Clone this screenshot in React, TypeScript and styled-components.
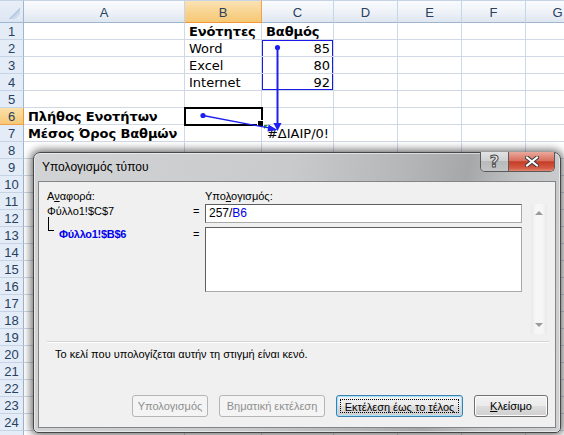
import React from "react";
import styled, { createGlobalStyle } from "styled-components";

type Align = "left" | "right" | "center";
type RangeEdge = "top" | "mid" | "bottom";

interface CellData {
  text?: string;
  bold?: boolean;
  align?: Align;
  range?: RangeEdge;
  active?: boolean;
  error?: boolean;
}

const COLUMNS = ["A", "B", "C", "D", "E", "F", "G"];
const ROW_COUNT = 25;
const SELECTED_COL = "B";
const SELECTED_ROW = 6;

const cells: Record<string, CellData> = {
  B1: { text: "Ενότητες", bold: true },
  C1: { text: "Βαθμός", bold: true },
  B2: { text: "Word" },
  C2: { text: "85", align: "right", range: "top" },
  B3: { text: "Excel" },
  C3: { text: "80", align: "right", range: "mid" },
  B4: { text: "Internet" },
  C4: { text: "92", align: "right", range: "bottom" },
  A6: { text: "Πλήθος Ενοτήτων", bold: true },
  B6: { active: true },
  A7: { text: "Μέσος Όρος Βαθμών", bold: true },
  C7: { text: "#ΔΙΑΙΡ/0!", align: "center", error: true },
};

export default function App() {
  const rows = Array.from({ length: ROW_COUNT }, (_, i) => i + 1);

  return (
    <>
      <GlobalStyle />
      <Sheet>
        <Grid>
          <Corner />
          {COLUMNS.map((col) => (
            <ColHead key={col} $selected={col === SELECTED_COL}>
              {col}
            </ColHead>
          ))}
          {rows.map((row) => (
            <React.Fragment key={row}>
              <RowHead $selected={row === SELECTED_ROW}>{row < ROW_COUNT ? row : ""}</RowHead>
              {COLUMNS.map((col) => {
                const c = cells[col + row] || {};
                return (
                  <Cell
                    key={col}
                    $bold={c.bold}
                    $align={c.align || "left"}
                    $range={c.range}
                    $active={c.active}
                    $error={c.error}
                  >
                    {c.text}
                  </Cell>
                );
              })}
            </React.Fragment>
          ))}
        </Grid>

        <Tracers width="564" height="435" viewBox="0 0 564 435">
          <circle cx="277.5" cy="47.5" r="2.6" />
          <line x1="277.5" y1="47.5" x2="277.5" y2="124" strokeWidth="2" />
          <polygon points="273.5,123 281.5,123 277.5,131" />
          <circle cx="203" cy="115.5" r="2.6" />
          <line x1="203" y1="115.5" x2="270" y2="128.2" strokeWidth="1.3" />
          <polygon points="268.5,124.5 267.5,131.5 277.5,130" />
        </Tracers>

        <Window>
          <TitleBar>
            <Caption>Υπολογισμός τύπου</Caption>
            <CaptionButtons>
              <HelpButton>?</HelpButton>
              <CloseButton>
                <svg width="14" height="11" viewBox="0 0 14 11">
                  <path d="M2 1.5 L12 9.5 M12 1.5 L2 9.5" stroke="#3b3b3b" strokeWidth="4" strokeLinecap="square" />
                  <path d="M2 1.5 L12 9.5 M12 1.5 L2 9.5" stroke="#fff" strokeWidth="2" strokeLinecap="square" />
                </svg>
              </CloseButton>
            </CaptionButtons>
          </TitleBar>

          <Client>
            <EvalGrid>
              <FieldLabel $area="rl">
                Α<u>ν</u>αφορά:
              </FieldLabel>
              <FieldLabel $area="el">
                Υπο<u>λ</u>ογισμός:
              </FieldLabel>
              <RefText>Φύλλο1!$C$7</RefText>
              <Equals $area="e1">=</Equals>
              <EvalInput>
                257/<RefPart>B6</RefPart>
              </EvalInput>
              <RefChild>Φύλλο1!$B$6</RefChild>
              <Equals $area="e2">=</Equals>
              <EvalBox />
              <ScrollBar>
                <ScrollArrow $dir="up" />
                <ScrollArrow $dir="down" />
              </ScrollBar>
            </EvalGrid>

            <Separator />
            <Message>Το κελί που υπολογίζεται αυτήν τη στιγμή είναι κενό.</Message>

            <ButtonRow>
              <DlgButton $w={76} $variant="disabled">
                Υπολογισμός
              </DlgButton>
              <DlgButton $w={106} $variant="disabled">
                Βηματική εκτέλεση
              </DlgButton>
              <DlgButton $w={127} $variant="default">
                <FocusRect>
                  Εκτέλεση έως το <u>τ</u>έλος
                </FocusRect>
              </DlgButton>
              <DlgButton $w={74}>
                <span>
                  <u>Κ</u>λείσιμο
                </span>
              </DlgButton>
            </ButtonRow>
          </Client>
        </Window>
      </Sheet>
    </>
  );
}

const GlobalStyle = createGlobalStyle`
  html, body {
    margin: 0;
    padding: 0;
    background: #fff;
    overflow: hidden;
  }
`;

const Sheet = styled.div`
  position: relative;
  width: 564px;
  height: 435px;
  overflow: hidden;
  background: #fff;
`;

const Grid = styled.div`
  display: grid;
  grid-template-columns: 24px 161px 77px 72px 64px 64px 64px 64px;
  grid-template-rows: 23px repeat(${ROW_COUNT}, 17px);
`;

const Corner = styled.div`
  position: relative;
  box-sizing: border-box;
  background: linear-gradient(#e9eff8, #dce6f2);
  border-right: 1px solid #9eb6ce;
  border-bottom: 1px solid #9eb6ce;
  border-top: 1px solid #c5d3e4;

  &::after {
    content: "";
    position: absolute;
    right: 3px;
    bottom: 3px;
    width: 11px;
    height: 11px;
    background: linear-gradient(135deg, transparent 50%, #b4c9e2 50%, #f3f7fc 100%);
  }
`;

const ColHead = styled.div<{ $selected?: boolean }>`
  box-sizing: border-box;
  display: flex;
  align-items: center;
  justify-content: center;
  border-top: 1px solid #c5d3e4;
  border-right: 1px solid ${(p) => (p.$selected ? "#f2a24a" : "#c8d5e5")};
  border-bottom: 1px solid ${(p) => (p.$selected ? "#f29536" : "#9eb6ce")};
  background: ${(p) =>
    p.$selected
      ? "linear-gradient(#fbe3b4, #f8d38f 55%, #f6c875)"
      : "linear-gradient(#f9fbfd, #eef2f8 55%, #dfe6f0)"};
  font: 13px "Liberation Sans", Arial, sans-serif;
  color: #27415f;
  padding-top: 1px;
`;

const RowHead = styled.div<{ $selected?: boolean }>`
  box-sizing: border-box;
  display: flex;
  align-items: center;
  justify-content: center;
  border-right: 1px solid ${(p) => (p.$selected ? "#f29536" : "#9eb6ce")};
  border-bottom: 1px solid ${(p) => (p.$selected ? "#f2a24a" : "#c5d3e4")};
  background: ${(p) => (p.$selected ? "linear-gradient(#fbe0aa, #f6c875)" : "#e4ecf7")};
  font: 13px "Liberation Sans", Arial, sans-serif;
  color: #27415f;
`;

const rangeShadow = (edge?: RangeEdge) => {
  if (!edge) return "none";
  const parts = ["inset 1px 0 0 #1a1ae6", "inset -1px 0 0 #1a1ae6"];
  if (edge === "top") parts.push("inset 0 1px 0 #1a1ae6");
  if (edge === "bottom") parts.push("inset 0 -1px 0 #1a1ae6");
  return parts.join(", ");
};

const Cell = styled.div<{
  $bold?: boolean;
  $align: Align;
  $range?: RangeEdge;
  $active?: boolean;
  $error?: boolean;
}>`
  position: relative;
  box-sizing: border-box;
  display: flex;
  align-items: center;
  justify-content: ${(p) =>
    p.$align === "right" ? "flex-end" : p.$align === "center" ? "center" : "flex-start"};
  padding: 1px 3px 0 4px;
  border-right: 1px solid #d0d7e5;
  border-bottom: 1px solid #d0d7e5;
  font: ${(p) => (p.$bold ? "bold" : "normal")} 13px "DejaVu Sans", Verdana, sans-serif;
  letter-spacing: ${(p) => (p.$bold ? "-0.1px" : "0")};
  color: #000;
  white-space: nowrap;
  box-shadow: ${(p) => rangeShadow(p.$range)};
  z-index: ${(p) => (p.$active ? 2 : 1)};
  outline: ${(p) => (p.$active ? "2px solid #000" : "none")};
  outline-offset: -1px;

  &::after {
    content: "";
    display: ${(p) => (p.$active ? "block" : "none")};
    position: absolute;
    right: -3px;
    bottom: -3px;
    width: 5px;
    height: 5px;
    background: #000;
    border: 1px solid #fff;
  }

  &::before {
    content: "";
    display: ${(p) => (p.$error ? "block" : "none")};
    position: absolute;
    left: 2px;
    top: 0;
    border-top: 4px solid #1e9a3a;
    border-right: 4px solid transparent;
  }
`;

const Tracers = styled.svg`
  position: absolute;
  left: 0;
  top: 0;
  z-index: 3;
  pointer-events: none;
  fill: #1f1ff0;
  stroke: #1f1ff0;

  circle,
  polygon {
    stroke: none;
  }
`;

const Window = styled.div`
  position: absolute;
  left: 33px;
  top: 152px;
  z-index: 5;
  width: 528px;
  height: 281px;
  box-sizing: border-box;
  display: flex;
  flex-direction: column;
  border: 1px solid #474747;
  border-radius: 7px 7px 5px 5px;
  background: linear-gradient(100deg, #d2d3d4 0%, #c9cacb 45%, #b5b6b7 65%, #a6a7a8 76%, #c4c5c6 86%, #d0d1d2 100%);
  box-shadow: 0 0 8px 2px rgba(0, 0, 0, 0.6), inset 0 0 0 1px rgba(255, 255, 255, 0.55);
  font-family: "Liberation Sans", Tahoma, Arial, sans-serif;
  font-size: 11px;
  color: #000;
`;

const TitleBar = styled.div`
  height: 28px;
  flex: none;
  display: flex;
  align-items: flex-start;
  justify-content: space-between;
  padding: 0 5px 0 8px;
`;

const Caption = styled.div`
  align-self: center;
  font-size: 12px;
  color: #000;
  padding-bottom: 1px;
`;

const CaptionButtons = styled.div`
  display: flex;
  height: 19px;
  margin-top: -1px;
  border: 1px solid #5a5a5a;
  border-top: none;
  border-radius: 0 0 5px 5px;
  overflow: hidden;
`;

const HelpButton = styled.div`
  width: 27px;
  display: flex;
  align-items: center;
  justify-content: center;
  background: linear-gradient(#e2e3e4, #cfd0d1 45%, #b9babb 50%, #c3c4c5);
  border-right: 1px solid #5a5a5a;
  font: bold 16px "DejaVu Sans", sans-serif;
  color: #eeeeee;
  -webkit-text-stroke: 1px #4a4a4a;
`;

const CloseButton = styled.div`
  width: 45px;
  display: flex;
  align-items: center;
  justify-content: center;
  background: linear-gradient(#e9a99c, #d86f5f 45%, #c43c26 52%, #d55a44 85%, #e18872);
`;

const Client = styled.div`
  flex: 1;
  margin: 0 4px 4px 4px;
  border: 1px solid #848484;
  background: #f0f0f0;
  display: flex;
  flex-direction: column;
  padding: 7px 0 0 0;
`;

const EvalGrid = styled.div`
  display: grid;
  margin-left: 8px;
  grid-template-columns: 146px 12px 317px 9px 16px;
  grid-template-rows: 15px 19px 69px 42px;
  grid-template-areas:
    "rl . el . ."
    "r1 e1 in . sb"
    "r2 e2 bx . sb"
    ". . . . sb";
  line-height: 15px;
`;

const FieldLabel = styled.div<{ $area: string }>`
  grid-area: ${(p) => p.$area};
  white-space: nowrap;
`;

const RefText = styled.div`
  grid-area: r1;
  white-space: nowrap;
`;

const RefChild = styled.div`
  grid-area: r2;
  position: relative;
  padding: 4px 0 0 12px;
  font-weight: bold;
  color: #0000ee;
  white-space: nowrap;
  letter-spacing: -0.3px;

  &::before {
    content: "";
    position: absolute;
    left: 1px;
    top: -6px;
    width: 5px;
    height: 13px;
    border-left: 1px solid #000;
    border-bottom: 1px solid #000;
  }
`;

const Equals = styled.div<{ $area: string }>`
  grid-area: ${(p) => p.$area};
  padding-top: ${(p) => (p.$area === "e2" ? "4px" : "0")};
`;

const EvalInput = styled.div`
  grid-area: in;
  box-sizing: border-box;
  display: flex;
  align-items: center;
  padding: 0 3px;
  background: #fff;
  border: 1px solid #6e6e6e;
  border-color: #5f5f5f #a9a9a9 #a9a9a9 #5f5f5f;
  font-size: 12px;
`;

const RefPart = styled.span`
  color: #0000ee;
`;

const EvalBox = styled.div`
  grid-area: bx;
  margin-top: 4px;
  height: 65px;
  box-sizing: border-box;
  background: #fff;
  border: 1px solid #6e6e6e;
  border-color: #5f5f5f #a9a9a9 #a9a9a9 #5f5f5f;
`;

const ScrollBar = styled.div`
  grid-area: sb;
  display: flex;
  flex-direction: column;
  justify-content: space-between;
  align-items: center;
  padding: 7px 0;
  background: linear-gradient(90deg, #e9e9e9, #f6f6f6 30%, #f6f6f6 70%, #e9e9e9);
`;

const ScrollArrow = styled.div<{ $dir: "up" | "down" }>`
  width: 0;
  height: 0;
  border-left: 4px solid transparent;
  border-right: 4px solid transparent;
  ${(p) =>
    p.$dir === "up" ? "border-bottom: 4px solid #9a9a9a;" : "border-top: 4px solid #9a9a9a;"}
`;

const Separator = styled.div`
  margin: 7px 6px 0 8px;
  border-top: 1px solid #d5d5d5;
  border-bottom: 1px solid #ffffff;
`;

const Message = styled.div`
  margin: 4px 0 0 16px;
  line-height: 15px;
`;

const ButtonRow = styled.div`
  display: flex;
  justify-content: flex-end;
  gap: 11px;
  margin: 33px 7px 0 0;
`;

const DlgButton = styled.button<{ $w: number; $variant?: "disabled" | "default" }>`
  width: ${(p) => p.$w}px;
  height: 22px;
  box-sizing: border-box;
  padding: 0;
  display: flex;
  align-items: center;
  justify-content: center;
  font: 11px "Liberation Sans", Tahoma, Arial, sans-serif;
  white-space: nowrap;
  border-radius: 3px;
  border: 1px solid
    ${(p) => (p.$variant === "disabled" ? "#b5b5b5" : p.$variant === "default" ? "#3c7fb1" : "#707070")};
  color: ${(p) => (p.$variant === "disabled" ? "#8f8f8f" : "#000")};
  background: ${(p) =>
    p.$variant === "disabled"
      ? "#f4f4f4"
      : "linear-gradient(#f2f2f2, #ebebeb 48%, #dddddd 52%, #cfcfcf)"};
  box-shadow: ${(p) =>
    p.$variant === "default" ? "inset 0 0 0 1px #a8e3fb" : p.$variant === "disabled" ? "none" : "inset 0 0 0 1px #fcfcfc"};
`;

const FocusRect = styled.span`
  display: block;
  width: calc(100% - 6px);
  height: calc(100% - 6px);
  box-sizing: border-box;
  border: 1px dotted #000;
  text-align: center;
  line-height: 14px;
`;
